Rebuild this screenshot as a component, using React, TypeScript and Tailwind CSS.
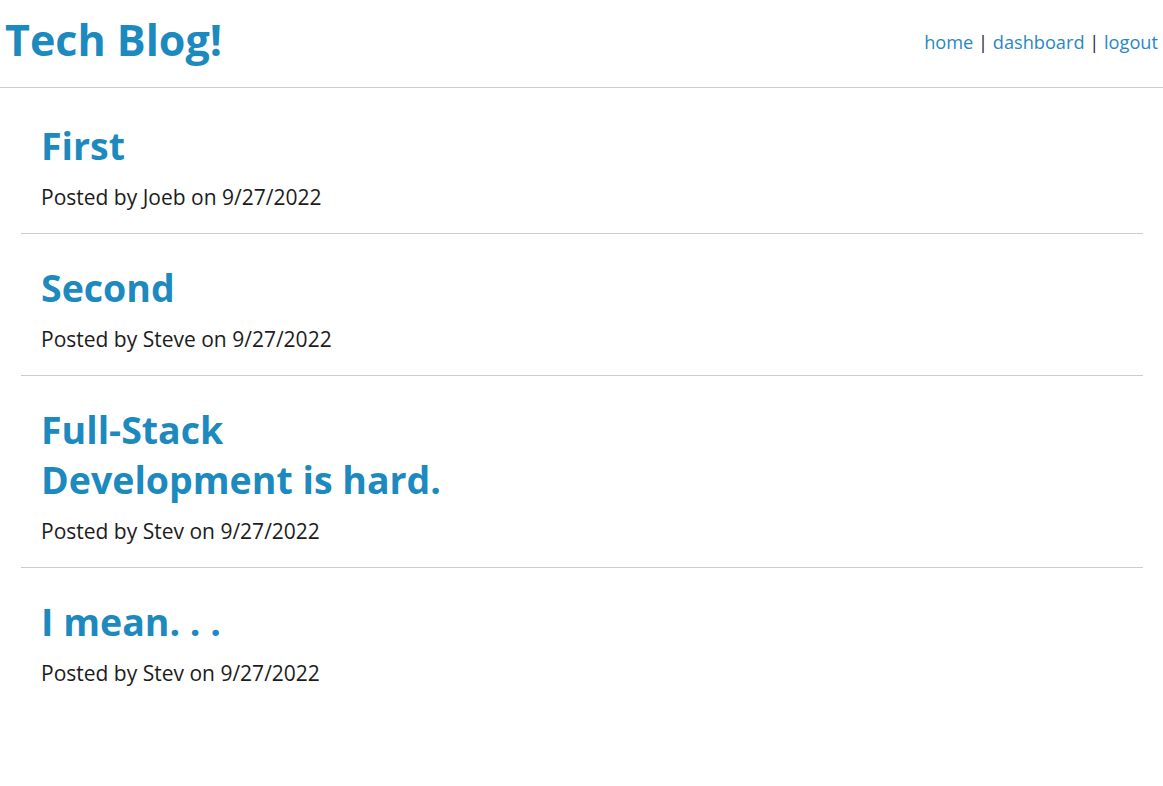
import React from "react";

type Post = { title: string; author: string; date: string };

const posts: Post[] = [
  { title: "First", author: "Joeb", date: "9/27/2022" },
  { title: "Second", author: "Steve", date: "9/27/2022" },
  { title: "Full-Stack Development is hard.", author: "Stev", date: "9/27/2022" },
  { title: "I mean. . .", author: "Stev", date: "9/27/2022" },
];

export default function App() {
  return (
    <div className="min-h-screen bg-white font-['Open_Sans',sans-serif] text-[#1c1c1c]">
      <header className="flex h-[88px] items-start justify-between border-b border-[#cccccc] pl-[5px] pr-[5px]">
        <h1 className="mt-[10px] text-[43px] font-bold leading-[60px] text-[#1c89bf]">Tech Blog!</h1>
        <nav className="mt-[30px] text-[18.2px] leading-[24px]">
          <a href="#" className="text-[#2a87c3]">home</a>
          <span className="text-[#1e1e3c]"> | </span>
          <a href="#" className="text-[#2a87c3]">dashboard</a>
          <span className="text-[#1e1e3c]"> | </span>
          <a href="#" className="text-[#2a87c3]">logout</a>
        </nav>
      </header>
      <main className="ml-[21px] mr-[20px] pt-[4px]">
        {posts.map((p, i) => (
          <article
            key={p.title}
            className={
              i < posts.length - 1
                ? "border-b border-[#cccccc] px-5 pt-[29px] pb-[22px]"
                : "px-5 pt-[29px] pb-[22px]"
            }
          >
            <h2 className="max-w-[420px] text-[37.5px] font-bold leading-[50px] text-[#1c89bf]">{p.title}</h2>
            <p className="mt-[12px] text-[21px] leading-[28px]">
              Posted by {p.author} on {p.date}
            </p>
          </article>
        ))}
      </main>
    </div>
  );
}
